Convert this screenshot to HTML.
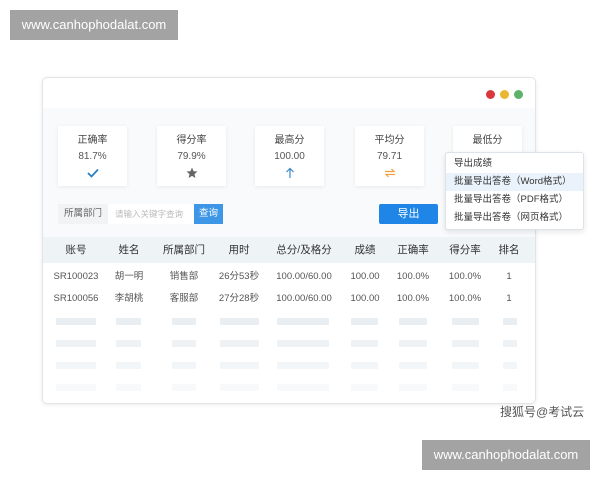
<!DOCTYPE html>
<html><head><meta charset="utf-8"><style>
*{margin:0;padding:0;box-sizing:border-box}
body{width:600px;height:480px;background:#fff;font-family:"Liberation Sans","Noto Sans CJK SC",sans-serif;position:relative;overflow:hidden;color:#555}
.abs{position:absolute}
.wm{position:absolute;background:#a3a3a3;color:#fff;font-size:13px;line-height:30px;text-align:center}
.win{left:42px;top:77px;width:494px;height:327px;border:1px solid #e2e5e8;border-radius:5px;background:#fff;box-shadow:0 1px 4px rgba(0,0,0,.08)}
.body{left:43px;top:108px;width:492px;height:130px;background:#f8fafc}
.card{position:absolute;top:126px;width:69px;height:60px;background:#fff;box-shadow:0 1px 4px rgba(0,0,0,.07);text-align:center;font-size:10px;color:#444}
.card .t{margin-top:8px;height:14px;line-height:14px}
.card .v{margin-top:3px;color:#555;line-height:12px}
.card svg{display:block;margin:4px auto 0}
.dot{position:absolute;top:90px;width:9px;height:9px;border-radius:50%}
.th{left:43px;top:237px;width:492px;height:26px;background:#eef3f6}
.c{position:absolute;font-size:9.5px;line-height:12px;height:12px;transform:translateX(-50%);white-space:nowrap}
.h{font-size:10.5px;color:#333;top:244px}
.bar{position:absolute;height:7px;background:#e8eef1;border-radius:1px}
.dd{left:445px;top:152px;width:139px;height:78px;background:#fff;border:1px solid #dde3e8;border-radius:3px;box-shadow:0 2px 6px rgba(0,0,0,.1);font-size:9.5px;color:#333}
.dd div{height:18px;line-height:18px;padding-left:8px}
</style></head><body>
<div class="wm" style="left:10px;top:10px;width:168px">www.canhophodalat.com</div>
<div class="wm" style="left:422px;top:440px;width:168px">www.canhophodalat.com</div>

<div class="abs win"></div>
<div class="abs body"></div>
<div class="dot" style="left:486px;background:#d9363e"></div>
<div class="dot" style="left:500px;background:#eab830"></div>
<div class="dot" style="left:514px;background:#5bb36b"></div>

<div class="card" style="left:58px"><div class="t">正确率</div><div class="v">81.7%</div><svg width="14" height="12" viewBox="0 0 14 12"><path d="M2 6 L5.5 9.5 L12 2.5" fill="none" stroke="#2b7fc4" stroke-width="1.8"/></svg></div>
<div class="card" style="left:157px"><div class="t">得分率</div><div class="v">79.9%</div><svg width="12" height="12" viewBox="0 0 12 12"><path d="M6 0.5 L7.6 4.2 L11.5 4.5 L8.5 7.1 L9.4 11 L6 8.9 L2.6 11 L3.5 7.1 L0.5 4.5 L4.4 4.2Z" fill="#666"/></svg></div>
<div class="card" style="left:255px"><div class="t">最高分</div><div class="v">100.00</div><svg width="10" height="12" viewBox="0 0 10 12"><path d="M5 11 V1.5 M1.5 5 L5 1.5 L8.5 5" fill="none" stroke="#3a88c8" stroke-width="1.2"/></svg></div>
<div class="card" style="left:355px"><div class="t">平均分</div><div class="v">79.71</div><svg width="12" height="12" viewBox="0 0 12 12"><path d="M1 4.5 H10 L7.5 2 M11 7.5 H2 L4.5 10" fill="none" stroke="#f0a040" stroke-width="1.2"/></svg></div>
<div class="card" style="left:453px"><div class="t">最低分</div></div>

<div class="abs" style="left:58px;top:204px;width:50px;height:20px;background:#f1f3f5;font-size:9.5px;line-height:20px;text-align:center;color:#666">所属部门</div>
<div class="abs" style="left:108px;top:204px;width:86px;height:20px;background:#fff;font-size:8.5px;line-height:20px;padding-left:7px;color:#bbb">请输入关键字查询</div>
<div class="abs" style="left:194px;top:204px;width:29px;height:20px;background:#3d96e6;font-size:9.5px;line-height:20px;text-align:center;color:#fff">查询</div>
<div class="abs" style="left:379px;top:204px;width:59px;height:20px;background:#1f86e8;font-size:11px;line-height:20px;text-align:center;color:#fff;border-radius:2px">导出</div>

<div class="abs th"></div>
<div class="c h" style="left:76px">账号</div><div class="c h" style="left:129px">姓名</div><div class="c h" style="left:184px">所属部门</div><div class="c h" style="left:239px">用时</div><div class="c h" style="left:304px">总分/及格分</div><div class="c h" style="left:365px">成绩</div><div class="c h" style="left:413px">正确率</div><div class="c h" style="left:465px">得分率</div><div class="c h" style="left:509px">排名</div>

<div class="c" style="top:271px;left:76px">SR100023</div><div class="c" style="top:271px;left:129px">胡一明</div><div class="c" style="top:271px;left:184px">销售部</div><div class="c" style="top:271px;left:239px">26分53秒</div><div class="c" style="top:271px;left:304px">100.00/60.00</div><div class="c" style="top:271px;left:365px">100.00</div><div class="c" style="top:271px;left:413px">100.0%</div><div class="c" style="top:271px;left:465px">100.0%</div><div class="c" style="top:271px;left:509px">1</div>
<div class="c" style="top:293px;left:76px">SR100056</div><div class="c" style="top:293px;left:129px">李胡桃</div><div class="c" style="top:293px;left:184px">客服部</div><div class="c" style="top:293px;left:239px">27分28秒</div><div class="c" style="top:293px;left:304px">100.00/60.00</div><div class="c" style="top:293px;left:365px">100.00</div><div class="c" style="top:293px;left:413px">100.0%</div><div class="c" style="top:293px;left:465px">100.0%</div><div class="c" style="top:293px;left:509px">1</div>

<div id="bars"></div>
<script>
var xs=[[56,96],[116,141],[172,196],[220,259],[277,329],[351,378],[399,427],[452,479],[503,517]];
var ys=[[318,1],[340,.75],[362,.5],[384,.35]];
var h='';ys.forEach(function(y){xs.forEach(function(x){h+='<div class="bar" style="left:'+x[0]+'px;width:'+(x[1]-x[0])+'px;top:'+y[0]+'px;opacity:'+y[1]+'"></div>';});});
document.getElementById('bars').innerHTML=h;
</script>

<div class="abs dd">
<div style="margin-top:2px">导出成绩</div>
<div style="background:#eaf3fb">批量导出答卷（Word格式）</div>
<div>批量导出答卷（PDF格式）</div>
<div>批量导出答卷（网页格式）</div>
</div>

<div class="abs" style="left:500px;top:403px;font-size:12px;color:#555">搜狐号@考试云</div>
</body></html>
